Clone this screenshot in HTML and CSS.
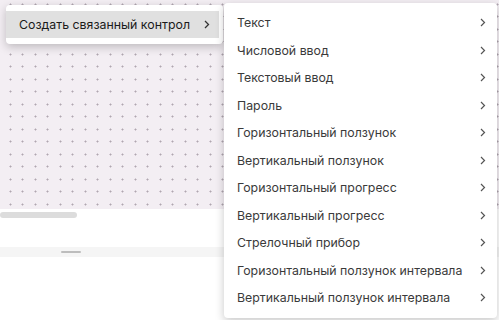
FILE: index.html
```html
<!DOCTYPE html>
<html lang="ru">
<head>
  <meta charset="UTF-8" />
  <meta name="viewport" content="width=device-width, initial-scale=1.0" />
  <title>Editor</title>
  <link rel="stylesheet" href="styles.css">
</head>
<body>
  <div class="workspace">
    <div class="canvas"></div>
    <div class="scroll-area">
      <div class="hscroll"></div>
    </div>
    <div class="panel-bar">
      <div class="grip"></div>
    </div>
  </div>

  <div class="context-menu">
    <div class="menu-item active">
      <span>Создать связанный контрол</span>
      <svg class="chevron" width="6" height="9" viewBox="0 0 6 9"><path d="M1 1l3.5 3.5L1 8" fill="none" stroke="#333" stroke-width="1.3"/></svg>
    </div>
  </div>

  <div class="submenu" id="submenu"></div>

  <script>
    const items = [
      "Текст",
      "Числовой ввод",
      "Текстовый ввод",
      "Пароль",
      "Горизонтальный ползунок",
      "Вертикальный ползунок",
      "Горизонтальный прогресс",
      "Вертикальный прогресс",
      "Стрелочный прибор",
      "Горизонтальный ползунок интервала",
      "Вертикальный ползунок интервала"
    ];

    document.getElementById("submenu").innerHTML = items.map(name => `
      <div class="menu-item">
        <span>${name}</span>
        <svg class="chevron" width="6" height="9" viewBox="0 0 6 9"><path d="M1 1l3.5 3.5L1 8" fill="none" stroke="#555" stroke-width="1.2"/></svg>
      </div>
    `).join("");
  </script>
</body>
</html>
```

FILE: styles.css
```css
body {
  margin: 0;
  padding: 0;
  font-family: Inter, 'Noto Sans', sans-serif;
  background: #fff;
  color: #333;
  overflow: hidden;
}

.workspace {
  width: 499px;
  height: 320px;
  display: flex;
  flex-direction: column;
}

/* dotted grid of small crosses */
.canvas {
  height: 209px;
  background-color: #f3eef3;
  background-image: url("data:image/svg+xml,%3Csvg xmlns='http://www.w3.org/2000/svg' width='12.5' height='12.5'%3E%3Cpath d='M5.25 6.25h2M6.25 5.25v2' stroke='%23b0a6b0' stroke-width='1'/%3E%3C/svg%3E");
  background-size: 12.5px 12.5px;
  background-position: 4px -2px;
}

.scroll-area {
  height: 38px;
  padding-top: 3px;
  box-sizing: border-box;
}

.hscroll {
  width: 77px;
  height: 6px;
  background: #dcdcdc;
  border-radius: 3px;
}

.panel-bar {
  height: 10px;
  background: #f5f5f5;
  display: flex;
  align-items: center;
  padding-left: 61px;
}

.grip {
  width: 20px;
  height: 2px;
  background: #bdbdbd;
  border-radius: 1px;
}

.context-menu {
  position: absolute;
  left: 6px;
  top: 5px;
  width: 217px;
  padding: 6px 0;
  background: #fff;
  border-radius: 4px;
  box-shadow: 0 3px 10px rgba(0, 0, 0, 0.22);
}

.context-menu .menu-item {
  height: 27px;
  padding: 0 9px 0 13px;
  margin-right: 4px;
  color: #1a1a1a;
}

.menu-item {
  display: flex;
  justify-content: space-between;
  align-items: center;
  font-size: 12.35px;
  white-space: nowrap;
}

.menu-item.active {
  background: #e0e0e0;
}

.submenu {
  position: absolute;
  left: 224px;
  top: 3px;
  width: 273px;
  padding: 6px 0;
  background: #fff;
  border-radius: 4px;
  box-shadow: 0 3px 10px rgba(0, 0, 0, 0.22);
}

.submenu .menu-item {
  height: 27.5px;
  padding: 0 11px 0 13px;
  color: #3a3a3a;
}
```
